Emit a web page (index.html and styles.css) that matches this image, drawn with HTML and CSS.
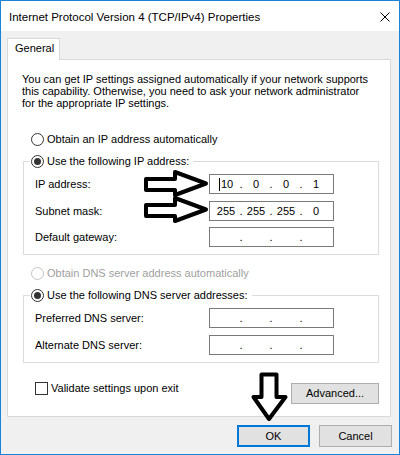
FILE: index.html
```html
<!DOCTYPE html>
<html lang="en">
<head>
  <meta charset="UTF-8" />
  <title>Internet Protocol Version 4 (TCP/IPv4) Properties</title>
  <link rel="stylesheet" href="styles.css">
</head>
<body>
  <div class="window">
    <div class="titlebar">
      <span class="title">Internet Protocol Version 4 (TCP/IPv4) Properties</span>
      <svg class="close" width="10" height="10" viewBox="0 0 10 10">
        <path d="M0.5 0.5 L9.5 9.5 M9.5 0.5 L0.5 9.5" stroke="#000" stroke-width="1" fill="none"/>
      </svg>
    </div>

    <div class="content">
      <div class="tabs">
        <div class="tab">General</div>
      </div>

      <div class="panel">
        <p class="intro">You can get IP settings assigned automatically if your network supports<br>this capability. Otherwise, you need to ask your network administrator<br>for the appropriate IP settings.</p>

        <div class="option option-top"><span class="radio"></span>Obtain an IP address automatically</div>

        <!-- IP address group -->
        <fieldset class="group">
          <legend class="option"><span class="radio checked"></span>Use the following IP address:</legend>
          <div class="field">
            <span class="label">IP address:</span>
            <div class="ip">
              <span class="octet"><i class="caret"></i>10</span><span class="dot">.</span>
              <span class="octet">0</span><span class="dot">.</span>
              <span class="octet">0</span><span class="dot">.</span>
              <span class="octet">1</span>
            </div>
          </div>
          <div class="field">
            <span class="label">Subnet mask:</span>
            <div class="ip">
              <span class="octet">255</span><span class="dot">.</span>
              <span class="octet">255</span><span class="dot">.</span>
              <span class="octet">255</span><span class="dot">.</span>
              <span class="octet">0</span>
            </div>
          </div>
          <div class="field">
            <span class="label">Default gateway:</span>
            <div class="ip">
              <span class="octet"></span><span class="dot">.</span>
              <span class="octet"></span><span class="dot">.</span>
              <span class="octet"></span><span class="dot">.</span>
              <span class="octet"></span>
            </div>
          </div>
        </fieldset>

        <div class="option option-dns disabled"><span class="radio"></span>Obtain DNS server address automatically</div>

        <!-- DNS group -->
        <fieldset class="group">
          <legend class="option"><span class="radio checked"></span>Use the following DNS server addresses:</legend>
          <div class="field">
            <span class="label">Preferred DNS server:</span>
            <div class="ip">
              <span class="octet"></span><span class="dot">.</span>
              <span class="octet"></span><span class="dot">.</span>
              <span class="octet"></span><span class="dot">.</span>
              <span class="octet"></span>
            </div>
          </div>
          <div class="field">
            <span class="label">Alternate DNS server:</span>
            <div class="ip">
              <span class="octet"></span><span class="dot">.</span>
              <span class="octet"></span><span class="dot">.</span>
              <span class="octet"></span><span class="dot">.</span>
              <span class="octet"></span>
            </div>
          </div>
        </fieldset>

        <div class="footer">
          <label class="check"><span class="box"></span>Validate settings upon exit</label>
          <button class="btn advanced">Advanced...</button>
        </div>
      </div>

      <div class="actions">
        <button class="btn btn-default">OK</button>
        <button class="btn">Cancel</button>
      </div>
    </div>

    <!-- hand drawn arrows on top of the screenshot -->
    <svg class="marks" width="400" height="455" viewBox="0 0 400 455">
      <g fill="none" stroke="#000" stroke-width="4" stroke-linejoin="round">
        <polygon points="146,179 175,179 175,172 206,183.5 175,195 175,190 146,190"/>
        <polygon points="146,205 175,205 175,198 206,209.5 175,221 175,216 146,216"/>
        <polygon points="261.5,374.5 276.5,374.5 276.5,397 285.5,397 269,419 253.5,397 261.5,397"/>
      </g>
    </svg>
  </div>
</body>
</html>
```

FILE: styles.css
```css
* {
  margin: 0;
  padding: 0;
  box-sizing: border-box;
}

body {
  font-family: "Liberation Sans", Arial, sans-serif;
  font-size: 11px;
  color: #000;
  background: #fff;
}

.window {
  position: relative;
  width: 400px;
  height: 455px;
  border: 1px solid #1883d7;
  background: #f0f0f0;
}

/* Title bar */
.titlebar {
  height: 30px;
  background: #fff;
  display: flex;
  align-items: center;
  justify-content: space-between;
  padding: 0 9px 0 8px;
}

.title {
  font-size: 11.5px;
  padding-top: 1px;
}

.close {
  display: block;
  margin-top: 1px;
}

.content {
  padding: 7px 7px 0 6px;
}

/* Tab strip */
.tabs {
  display: flex;
}

.tab {
  position: relative;
  z-index: 1;
  width: 53px;
  height: 22px;
  margin-bottom: -1px;
  padding: 2px 0 0 7px;
  line-height: 14px;
  background: #fff;
  border: 1px solid #d9d9d9;
  border-bottom: none;
}

.panel {
  height: 358px;
  margin-right: 1px;
  padding-top: 13px;
  background: #fff;
  border: 1px solid #d9d9d9;
}

.intro {
  margin-left: 14px;
  line-height: 12px;
}

/* Radio rows */
.option {
  display: flex;
  align-items: center;
  gap: 3px;
  height: 13px;
  line-height: 13px;
  white-space: nowrap;
}

.option-top {
  margin: 24px 0 0 23px;
}

.option-dns {
  margin: 12px 0 0 23px;
}

.radio {
  width: 13px;
  height: 13px;
  border: 1px solid #333;
  border-radius: 50%;
  background: #fff;
  display: flex;
  align-items: center;
  justify-content: center;
}

.radio.checked::after {
  content: "";
  width: 7px;
  height: 7px;
  border-radius: 50%;
  background: #333;
}

.disabled {
  color: #a0a0a0;
}

.disabled .radio {
  border-color: #c4c4c4;
}

/* Group boxes */
.group {
  margin: 9px 11px 0 15px;
  padding: 6px 0 7px 11px;
  border: 1px solid #dcdcdc;
  min-width: 0;
}

.group legend {
  margin-left: -5px;
  padding: 0 4px 0 1px;
}

.field {
  display: flex;
  align-items: center;
  height: 20px;
}

.field + .field {
  margin-top: 6.5px;
}

.label {
  width: 174px;
}

/* IP address control */
.ip {
  width: 125px;
  height: 20px;
  border: 1px solid #7a7a7a;
  background: #fff;
  display: flex;
  align-items: center;
  padding-left: 3px;
}

.octet {
  width: 26px;
  display: flex;
  align-items: center;
  justify-content: center;
}

.dot {
  width: 4px;
  text-align: center;
}

.caret {
  width: 1px;
  height: 13px;
  background: #000;
  margin-right: 1px;
}

/* Bottom of the tab page */
.footer {
  display: flex;
  justify-content: space-between;
  align-items: flex-start;
  margin: 19px 11px 0 15px;
}

.check {
  display: flex;
  align-items: center;
  gap: 3px;
  height: 13px;
  line-height: 13px;
  margin-left: 12px;
}

.box {
  width: 13px;
  height: 13px;
  border: 1px solid #333;
  background: #fff;
}

.btn {
  font-family: inherit;
  font-size: 11px;
  color: #000;
  background: #e1e1e1;
  border: 1px solid #adadad;
  height: 22px;
  width: 73px;
}

.advanced {
  width: 88px;
  height: 21px;
  margin-top: 1px;
}

.btn-default {
  border: 2px solid #0078d7;
}

.actions {
  display: flex;
  justify-content: flex-end;
  gap: 9px;
  margin-top: 8px;
}

/* Annotation arrows */
.marks {
  position: absolute;
  top: -1px;
  left: -1px;
  pointer-events: none;
}
```
